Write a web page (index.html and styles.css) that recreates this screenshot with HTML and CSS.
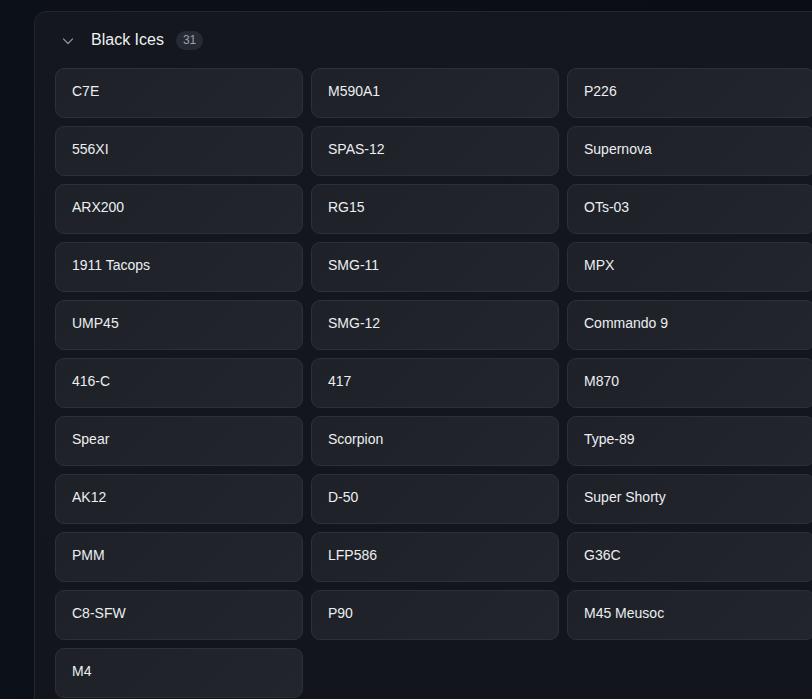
FILE: index.html
```html
<!DOCTYPE html>
<html>
<head>
<meta charset="utf-8">
<link rel="stylesheet" href="styles.css">
</head>
<body>
<div class="page">
  <section class="panel">
    <header class="panel-head">
      <svg class="chev" width="12" height="12" viewBox="0 0 12 12"><path d="M1.5 4 L6 8.5 L10.5 4" fill="none" stroke="#8a8f99" stroke-width="1.2" stroke-linecap="round" stroke-linejoin="round"/></svg>
      <h2 class="title">Black Ices</h2>
      <span class="badge">31</span>
    </header>
    <div class="grid">
      <div class="card">C7E</div>
      <div class="card">M590A1</div>
      <div class="card">P226</div>
      <div class="card">556XI</div>
      <div class="card">SPAS-12</div>
      <div class="card">Supernova</div>
      <div class="card">ARX200</div>
      <div class="card">RG15</div>
      <div class="card">OTs-03</div>
      <div class="card">1911 Tacops</div>
      <div class="card">SMG-11</div>
      <div class="card">MPX</div>
      <div class="card">UMP45</div>
      <div class="card">SMG-12</div>
      <div class="card">Commando 9</div>
      <div class="card">416-C</div>
      <div class="card">417</div>
      <div class="card">M870</div>
      <div class="card">Spear</div>
      <div class="card">Scorpion</div>
      <div class="card">Type-89</div>
      <div class="card">AK12</div>
      <div class="card">D-50</div>
      <div class="card">Super Shorty</div>
      <div class="card">PMM</div>
      <div class="card">LFP586</div>
      <div class="card">G36C</div>
      <div class="card">C8-SFW</div>
      <div class="card">P90</div>
      <div class="card">M45 Meusoc</div>
      <div class="card">M4</div>
    </div>
  </section>
</div>
</body>
</html>
```

FILE: styles.css
```css
html, body {
  margin: 0;
  padding: 0;
  overflow: hidden;
  height: 100%;
}
body {
  background: linear-gradient(90deg, #0c1019 0%, #0b0e15 60%, #0a0d13 100%);
  font-family: "Liberation Sans", Arial, sans-serif;
  color: #e6e8ec;
}
.page {
  padding: 11px 0 0 34px;
  height: 100%;
  box-sizing: border-box;
  overflow: hidden;
}
.panel {
  width: 800px;
  box-sizing: border-box;
  background: linear-gradient(180deg, #14171d 0%, #12151b 100%);
  border: 1px solid #22262d;
  border-radius: 12px;
  padding: 0 20px 20px 20px;
}
.panel-head {
  display: flex;
  align-items: center;
  height: 56px;
  padding-left: 7px;
}
.chev {
  display: block;
  margin-top: 1px;
}
.title {
  margin: 0 0 0 17px;
  font-size: 16px;
  font-weight: 400;
  color: #eef0f3;
}
.badge {
  margin-left: 12px;
  background: #262a32;
  color: #9a9fa8;
  font-size: 12px;
  line-height: 19px;
  height: 19px;
  padding: 0 7px;
  border-radius: 10px;
  text-align: center;
}
.grid {
  display: grid;
  grid-template-columns: repeat(3, 248px);
  gap: 8px;
}
.card {
  height: 50px;
  box-sizing: border-box;
  border: 1px solid #2c3038;
  border-radius: 9px;
  background: linear-gradient(135deg, #1e2128 0%, #22252c 100%);
  padding: 0 16px 4px 16px;
  display: flex;
  align-items: center;
  font-size: 14px;
  color: #eceef1;
}
```
